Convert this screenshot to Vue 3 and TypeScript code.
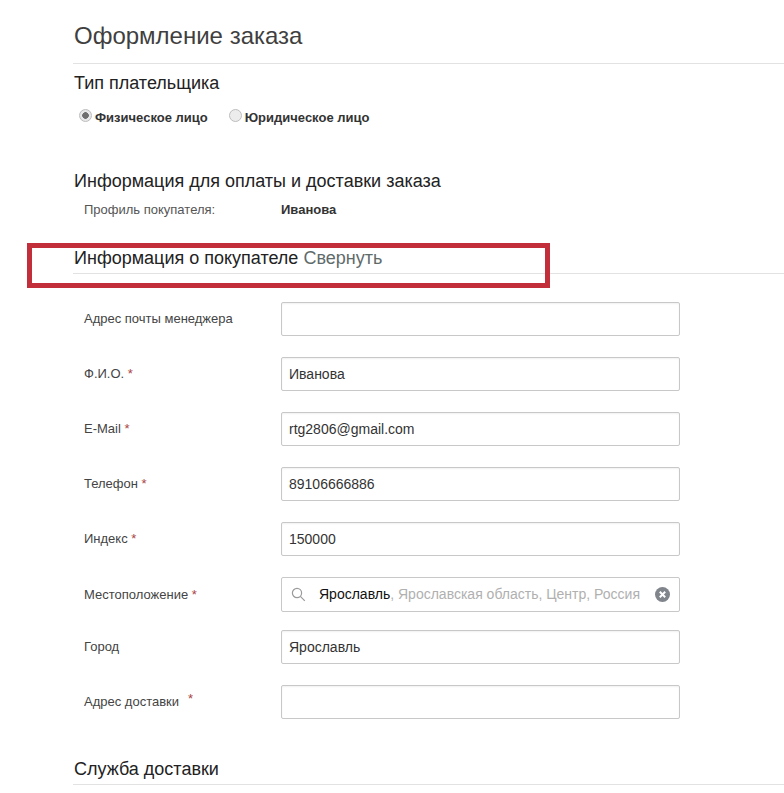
<script setup lang="ts">
interface Field { label: string; value: string; required?: boolean; gap?: boolean }
const before: Field[] = [
  { label: 'Адрес почты менеджера', value: '' },
  { label: 'Ф.И.О.', value: 'Иванова', required: true },
  { label: 'E-Mail', value: 'rtg2806@gmail.com', required: true },
  { label: 'Телефон', value: '89106666886', required: true },
  { label: 'Индекс', value: '150000', required: true },
]
const after: Field[] = [
  { label: 'Город', value: 'Ярославль' },
  { label: 'Адрес доставки', value: '', required: true, gap: true },
]
</script>

<template>
  <main class="page">
    <h1 class="title">Оформление заказа</h1>
    <h2 class="h-payer">Тип плательщика</h2>
    <div class="radios">
      <label class="radio"><span class="dot on"></span>Физическое лицо</label>
      <label class="radio"><span class="dot"></span>Юридическое лицо</label>
    </div>
    <h2 class="h-info">Информация для оплаты и доставки заказа</h2>
    <div class="profile">
      <span class="profile-label">Профиль покупателя:</span>
      <b>Иванова</b>
    </div>
    <div class="h-buyer-wrap">
      <h2 class="h-buyer">Информация о покупателе <a class="collapse">Свернуть</a></h2>
      <div class="red-box"></div>
    </div>
    <div class="fields">
      <div v-for="f in before" :key="f.label" class="row">
        <span class="label">{{ f.label }}<i v-if="f.required" class="req"> *</i></span>
        <div class="input">{{ f.value }}</div>
      </div>
      <div class="row row-loc">
        <span class="label">Местоположение<i class="req"> *</i></span>
        <div class="input loc">
          <svg class="search" width="15" height="15" viewBox="0 0 15 15" fill="none" stroke="#9a9a9a" stroke-width="1.2">
            <circle cx="6" cy="6" r="4.6" />
            <path d="M9.4 9.4 L13.8 13.8" />
          </svg>
          <span class="loc-text"><span class="city">Ярославль</span>, Ярославская область, Центр, Россия</span>
          <svg class="clear" width="15" height="15" viewBox="0 0 15 15">
            <circle cx="7.5" cy="7.5" r="7.5" fill="#80858b" />
            <path d="M4.8 4.8 L10.2 10.2 M10.2 4.8 L4.8 10.2" stroke="#fff" stroke-width="2" />
          </svg>
        </div>
      </div>
      <div v-for="f in after" :key="f.label" class="row row-after">
        <span class="label">{{ f.label }}<i v-if="f.required" class="req" :class="{ far: f.gap }">*</i></span>
        <div class="input">{{ f.value }}</div>
      </div>
    </div>
    <h2 class="h-delivery">Служба доставки</h2>
  </main>
</template>

<style>
html, body { margin: 0; background: #fff; overflow: hidden; }
</style>

<style scoped>
.page {
  height: 793px;
  box-sizing: border-box;
  padding: 0 0 0 73px;
  font-family: "Liberation Sans", Arial, sans-serif;
  color: #222;
  overflow: hidden;
}
h1, h2 { margin: 0; font-weight: 400; }
.title {
  font-size: 24px;
  line-height: 26px;
  padding: 23px 0 14px 1px;
  color: #3f3f3f;
  border-bottom: 1px solid #e2e2e2;
}
h2 { font-size: 18px; line-height: 20px; padding-left: 1px; color: #222; }
.h-payer { margin-top: 9px; }
.radios { display: flex; gap: 21px; margin: 16px 0 0 6px; height: 16px; align-items: center; }
.radio { display: flex; align-items: center; font-size: 13px; font-weight: 700; color: #333; }
.dot {
  width: 11px; height: 11px; border-radius: 50%;
  border: 1px solid #bdbdbd; background: #ececec; margin: -3px 3px 0 0;
  box-sizing: content-box;
}
.dot.on { background: radial-gradient(circle, #6f6f6f 0 3px, #e8e8e8 3.6px); }
.h-info { margin-top: 46px; }
.profile { display: flex; margin: 11px 0 0 11px; font-size: 13px; line-height: 16px; color: #555; }
.profile-label { width: 197px; }
.profile b { color: #333; }
.h-buyer-wrap { position: relative; margin-top: 30px; border-bottom: 1px solid #e2e2e2; padding-bottom: 5px; }
.h-buyer { line-height: 20px; }
.collapse { color: #5f6b6b; }
.red-box {
  position: absolute; left: -46px; top: -5px;
  width: 523px; height: 45px; box-sizing: border-box;
  border: 5px solid #c22f3a;
}
.fields { display: flex; flex-direction: column; margin-top: 27px; }
.row { display: flex; align-items: center; height: 35px; margin-bottom: 20px; }
.row-loc { margin-bottom: 17px; height: 36px; }
.row-after { margin-bottom: 20px; }
.label { flex: none; width: 208px; padding-left: 11px; margin-top: 0; box-sizing: border-box; font-size: 13px; color: #444; }
.req { color: #a44; font-style: normal; }
.far { margin-left: 9px; position: relative; top: -3px; }
.input {
  width: 399px; height: 34px; box-sizing: border-box;
  border: 1px solid #c8c8c8; border-radius: 2px;
  box-shadow: inset 0 1px 2px rgba(0,0,0,.06);
  padding: 0 7px; font-size: 14px; line-height: 32px; color: #333;
}
.loc { position: relative; display: flex; align-items: center; height: 35px; padding: 0 9px; box-shadow: none; }
.search { flex: none; margin-right: 13px; }
.loc-text { font-size: 14px; color: #b0b0b0; white-space: nowrap; }
.city { color: #111; }
.clear { position: absolute; right: 9px; top: 9px; }
.h-delivery { margin-top: 20px; padding-bottom: 5px; border-bottom: 1px solid #e2e2e2; }
</style>
